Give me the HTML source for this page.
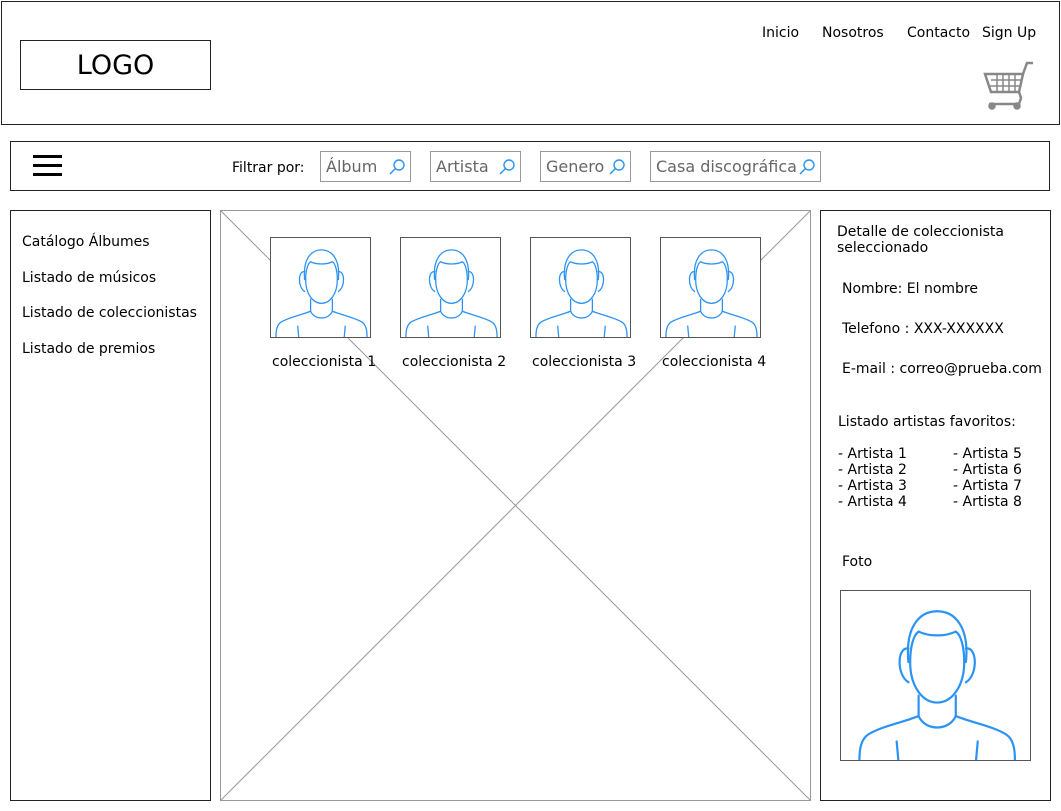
<!DOCTYPE html>
<html><head><meta charset="utf-8"><style>
*{margin:0;padding:0;box-sizing:border-box}
body{width:1061px;height:811px;background:#fff;position:relative;overflow:hidden;font-family:"DejaVu Sans","Liberation Sans",sans-serif;font-size:14px;color:#000}
.a{position:absolute}
.bx{position:absolute;border:1.5px solid #222}
.t{position:absolute;white-space:nowrap}
.in{position:absolute;border:1px solid #999;height:31px;top:151px;color:#666;font-size:16px;line-height:29px;padding-left:5px}
.in svg{position:absolute;right:4px;top:6px}
.ph{position:absolute;border:1px solid #555;background:#fff}
</style></head><body>
<svg width="0" height="0" style="position:absolute"><defs>
<g id="p" fill="none" stroke="#2b93f5" stroke-width="1.3" stroke-linecap="round">
<path d="M34 42 C32 22 40 12 51 12 C62 12 70 22 68 42"/>
<path d="M35 42 C35 33 37 26 40 24 C46 27 56 27 62 24 C65 26 67 33 67 42"/>
<path d="M35 42 C35 56 42 66 51 66 C60 66 67 56 67 42"/>
<path d="M34 34 C27 33 27 50 34 54"/><path d="M68 34 C75 33 75 50 68 54"/>
<path d="M40 62 L40 74 M62 62 L62 74"/>
<path d="M40 74 C44 83 58 83 62 74"/>
<path d="M40 74 C30 78 18 80 10 85 C6 88 5 93 5 100"/>
<path d="M62 74 C72 78 84 80 92 85 C96 88 97 93 97 100"/>
<path d="M27 89 L28 100 M75 89 L74 100"/>
</g></defs></svg>

<div class="bx" style="left:1px;top:1px;width:1059px;height:124px"></div>
<div class="bx" style="left:20px;top:40px;width:191px;height:50px;font-size:27px;text-align:center;line-height:50px">LOGO</div>
<div class="t" style="left:762px;top:25px">Inicio</div>
<div class="t" style="left:822px;top:25px">Nosotros</div>
<div class="t" style="left:907px;top:25px">Contacto</div>
<div class="t" style="left:982px;top:25px">Sign Up</div>
<svg class="a" style="left:983px;top:60px" width="52" height="52" viewBox="0 0 52 52" fill="none" stroke="#888" stroke-width="2.5">
<path d="M2 14 H40 L36 32 H8 Z"/><path d="M8 20 H38 M7 26 H37 M14 14 V32 M20 14 V32 M26 14 V32 M32 14 V32" stroke-width="1.5"/>
<path d="M40 14 L44 3 H50"/><path d="M36 32 L38 38 L36 44 H6"/>
<circle cx="9" cy="46" r="2.5" fill="#888"/><circle cx="34" cy="46" r="2.5" fill="#888"/></svg>

<div class="bx" style="left:10px;top:141px;width:1040px;height:50px"></div>
<div class="a" style="left:33px;top:155px;width:29px;height:3px;background:#000"></div>
<div class="a" style="left:33px;top:164px;width:29px;height:3px;background:#000"></div>
<div class="a" style="left:33px;top:173px;width:29px;height:3px;background:#000"></div>
<div class="t" style="left:232px;top:160px">Filtrar por:</div>
<div class="in" style="left:320px;width:91px">Álbum<svg width="18" height="18" viewBox="0 0 18 18" fill="none" stroke="#2b93f5" stroke-width="1.4"><circle cx="11" cy="7" r="5"/><path d="M7.5 10.5 L2 16"/></svg></div>
<div class="in" style="left:430px;width:91px">Artista<svg width="18" height="18" viewBox="0 0 18 18" fill="none" stroke="#2b93f5" stroke-width="1.4"><circle cx="11" cy="7" r="5"/><path d="M7.5 10.5 L2 16"/></svg></div>
<div class="in" style="left:540px;width:91px">Genero<svg width="18" height="18" viewBox="0 0 18 18" fill="none" stroke="#2b93f5" stroke-width="1.4"><circle cx="11" cy="7" r="5"/><path d="M7.5 10.5 L2 16"/></svg></div>
<div class="in" style="left:650px;width:171px">Casa discográfica<svg width="18" height="18" viewBox="0 0 18 18" fill="none" stroke="#2b93f5" stroke-width="1.4"><circle cx="11" cy="7" r="5"/><path d="M7.5 10.5 L2 16"/></svg></div>

<div class="bx" style="left:10px;top:210px;width:201px;height:591px"></div>
<div class="t" style="left:22px;top:234px">Catálogo Álbumes</div>
<div class="t" style="left:22px;top:270px">Listado de músicos</div>
<div class="t" style="left:22px;top:305px">Listado de coleccionistas</div>
<div class="t" style="left:22px;top:341px">Listado de premios</div>

<div class="a" style="left:220px;top:210px;width:591px;height:591px;border:1px solid #999"></div>
<svg class="a" style="left:220px;top:210px" width="591" height="591"><path d="M0 0 L591 591 M591 0 L0 591" stroke="#999" stroke-width="1"/></svg>

<div class="ph" style="left:270px;top:237px;width:101px;height:101px"><svg width="99" height="99" viewBox="0 0 100 100"><use href="#p"/></svg></div>
<div class="ph" style="left:400px;top:237px;width:101px;height:101px"><svg width="99" height="99" viewBox="0 0 100 100"><use href="#p"/></svg></div>
<div class="ph" style="left:530px;top:237px;width:101px;height:101px"><svg width="99" height="99" viewBox="0 0 100 100"><use href="#p"/></svg></div>
<div class="ph" style="left:660px;top:237px;width:101px;height:101px"><svg width="99" height="99" viewBox="0 0 100 100"><use href="#p"/></svg></div>
<div class="t" style="left:272px;top:354px">coleccionista 1</div>
<div class="t" style="left:402px;top:354px">coleccionista 2</div>
<div class="t" style="left:532px;top:354px">coleccionista 3</div>
<div class="t" style="left:662px;top:354px">coleccionista 4</div>

<div class="bx" style="left:820px;top:210px;width:231px;height:591px"></div>
<div class="t" style="left:837px;top:224px;line-height:16px">Detalle de coleccionista<br>seleccionado</div>
<div class="t" style="left:842px;top:281px">Nombre: El nombre</div>
<div class="t" style="left:842px;top:321px">Telefono : XXX-XXXXXX</div>
<div class="t" style="left:842px;top:361px">E-mail : correo@prueba.com</div>
<div class="t" style="left:838px;top:414px">Listado artistas favoritos:</div>
<div class="t" style="left:838px;top:446px;line-height:16px">- Artista 1<br>- Artista 2<br>- Artista 3<br>- Artista 4</div>
<div class="t" style="left:953px;top:446px;line-height:16px">- Artista 5<br>- Artista 6<br>- Artista 7<br>- Artista 8</div>
<div class="t" style="left:842px;top:554px">Foto</div>
<div class="ph" style="left:840px;top:590px;width:191px;height:171px"><svg width="189" height="169" viewBox="0 0 100 100" preserveAspectRatio="xMidYMax meet"><use href="#p"/></svg></div>
</body></html>
